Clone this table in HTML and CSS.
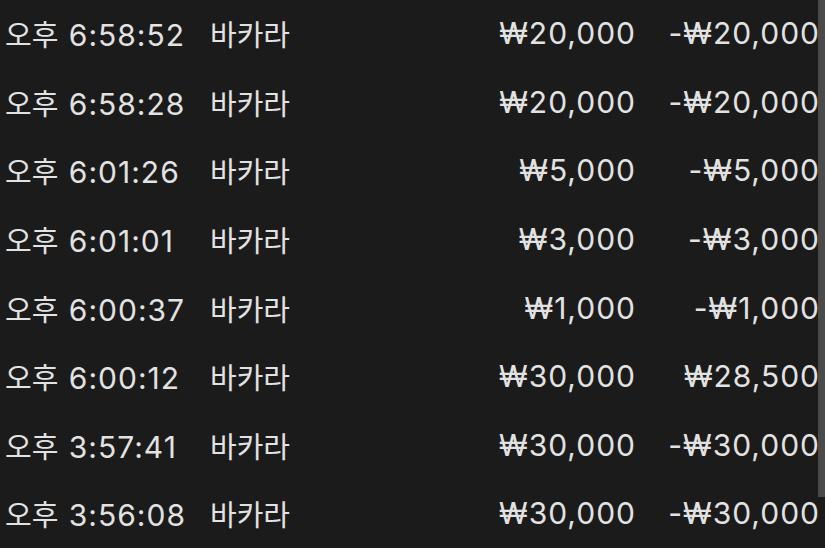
FILE: index.html
```html
<!DOCTYPE html>
<html lang="ko">
<head>
<meta charset="utf-8">
<link rel="stylesheet" href="styles.css">
</head>
<body>
<div class="list">
  <div class="row"><span class="time"><span class="ko">오후</span> 6:58:52</span><span class="game ko">바카라</span><span class="amt">₩20,000</span><span class="pl">-₩20,000</span></div>
  <div class="row"><span class="time"><span class="ko">오후</span> 6:58:28</span><span class="game ko">바카라</span><span class="amt">₩20,000</span><span class="pl">-₩20,000</span></div>
  <div class="row"><span class="time"><span class="ko">오후</span> 6:01:26</span><span class="game ko">바카라</span><span class="amt">₩5,000</span><span class="pl">-₩5,000</span></div>
  <div class="row"><span class="time"><span class="ko">오후</span> 6:01:01</span><span class="game ko">바카라</span><span class="amt">₩3,000</span><span class="pl">-₩3,000</span></div>
  <div class="row"><span class="time"><span class="ko">오후</span> 6:00:37</span><span class="game ko">바카라</span><span class="amt">₩1,000</span><span class="pl">-₩1,000</span></div>
  <div class="row"><span class="time"><span class="ko">오후</span> 6:00:12</span><span class="game ko">바카라</span><span class="amt">₩30,000</span><span class="pl">₩28,500</span></div>
  <div class="row"><span class="time"><span class="ko">오후</span> 3:57:41</span><span class="game ko">바카라</span><span class="amt">₩30,000</span><span class="pl">-₩30,000</span></div>
  <div class="row"><span class="time"><span class="ko">오후</span> 3:56:08</span><span class="game ko">바카라</span><span class="amt">₩30,000</span><span class="pl">-₩30,000</span></div>
</div>
<div class="scrollbar"></div>
</body>
</html>
```
FILE: styles.css
```css
html, body {
  margin: 0;
  padding: 0;
  background: #1b1b1b;
  overflow: hidden;
  height: 548px;
}
body {
  position: relative;
  color: #e2e2e2;
  font-family: Inter, "Noto Sans CJK KR", sans-serif;
  font-size: 30px;
  letter-spacing: 1px;
}
.list {
  display: flex;
  flex-direction: column;
  padding: 0 6px 0 5px;
  margin-top: -1px;
}
.row {
  display: grid;
  grid-template-columns: 205px 1fr 140px 184px;
  align-items: center;
  height: 68.6px;
  white-space: nowrap;
}
.ko {
  font-family: "Noto Sans CJK KR", sans-serif;
  font-size: 29px;
  letter-spacing: 0;
}
.time .ko {
  margin-right: 1px;
}
.amt, .pl {
  text-align: right;
  margin-right: -1px;
}
.scrollbar {
  position: absolute;
  top: 0;
  right: 0;
  width: 7px;
  height: 497px;
  background: #4a4a4a;
}
```
